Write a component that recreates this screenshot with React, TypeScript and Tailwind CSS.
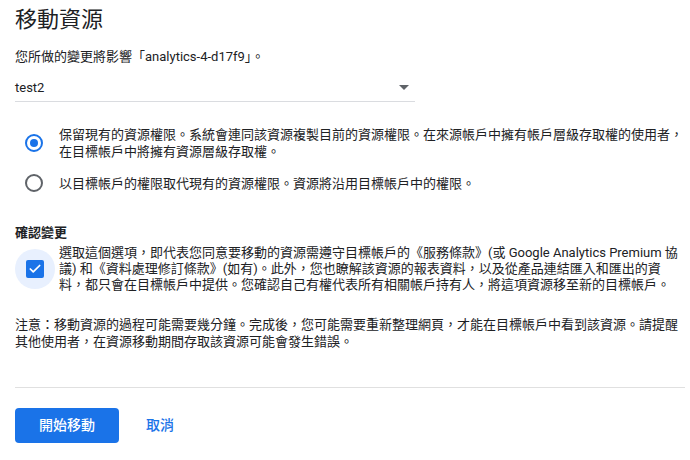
import { Check } from "lucide-react";

const font = "font-['Roboto','Noto_Sans_CJK_TC',sans-serif]";

export default function App() {
  return (
    <div className={`w-[690px] h-[460px] bg-white text-[#202124] ${font} overflow-hidden`}>
      <div className="pl-[15px] pr-[5px] pt-[6px] flex flex-col">
        {/* Header */}
        <h1 className="text-[22px] leading-[28px] font-normal">移動資源</h1>
        <p className="mt-[14px] text-[13px] leading-[17px]">
          您所做的變更將影響「analytics-4-d17f9」。
        </p>

        {/* Select */}
        <div className="mt-[14px] w-[400px] flex items-center justify-between pb-[5px] border-b border-[#dadce0]">
          <span className="text-[13px] leading-[17px]">test2</span>
          <svg width="10" height="5" viewBox="0 0 10 5" className="mr-[6px]">
            <path d="M0 0 L10 0 L5 5 Z" fill="#5f6368" />
          </svg>
        </div>

        {/* Radios */}
        <div className="mt-[24px] flex flex-col gap-[14px]">
          <label className="flex items-center pl-[10px] gap-[16px]">
            <span className="w-[18px] h-[18px] shrink-0 rounded-full border-2 border-[#1a73e8] flex items-center justify-center">
              <span className="w-[8px] h-[8px] rounded-full bg-[#1a73e8]" />
            </span>
            <span className="text-[13px] leading-[17px]">
              保留現有的資源權限。系統會連同該資源複製目前的資源權限。在來源帳戶中擁有帳戶層級存取權的使用者，在目標帳戶中將擁有資源層級存取權。
            </span>
          </label>
          <label className="flex items-center pl-[10px] gap-[16px]">
            <span className="w-[18px] h-[18px] shrink-0 rounded-full border-2 border-[#5f6368]" />
            <span className="text-[13px] leading-[17px]">
              以目標帳戶的權限取代現有的資源權限。資源將沿用目標帳戶中的權限。
            </span>
          </label>
        </div>

        {/* Confirm */}
        <h2 className="mt-[32px] text-[13px] leading-[17px] font-bold">確認變更</h2>
        <label className="mt-[4px] flex items-center gap-[4px]">
          <span className="w-[40px] h-[40px] shrink-0 rounded-full bg-[#e8f0fe] flex items-center justify-center">
            <span className="w-[18px] h-[18px] rounded-[2px] bg-[#1a73e8] flex items-center justify-center">
              <Check size={14} strokeWidth={3} className="text-white" />
            </span>
          </span>
          <span className="text-[13px] leading-[16px]">
            選取這個選項，即代表您同意要移動的資源需遵守目標帳戶的《服務條款》(或 Google Analytics Premium 協議) 和《資料處理修訂條款》(如有)。此外，您也瞭解該資源的報表資料，以及從產品連結匯入和匯出的資料，都只會在目標帳戶中提供。您確認自己有權代表所有相關帳戶持有人，將這項資源移至新的目標帳戶。
          </span>
        </label>

        <p className="mt-[23px] text-[13px] leading-[17px]">
          注意：移動資源的過程可能需要幾分鐘。完成後，您可能需要重新整理網頁，才能在目標帳戶中看到該資源。請提醒其他使用者，在資源移動期間存取該資源可能會發生錯誤。
        </p>

        <div className="mt-[37px] border-t border-[#e0e0e0]" />

        {/* Actions */}
        <div className="mt-[20px] flex items-center gap-[27px]">
          <button className="w-[104px] h-[35px] rounded-[4px] bg-[#1a73e8] text-white text-[14px] font-medium">
            開始移動
          </button>
          <button className="text-[#1a73e8] text-[14px] font-medium">取消</button>
        </div>
      </div>
    </div>
  );
}
